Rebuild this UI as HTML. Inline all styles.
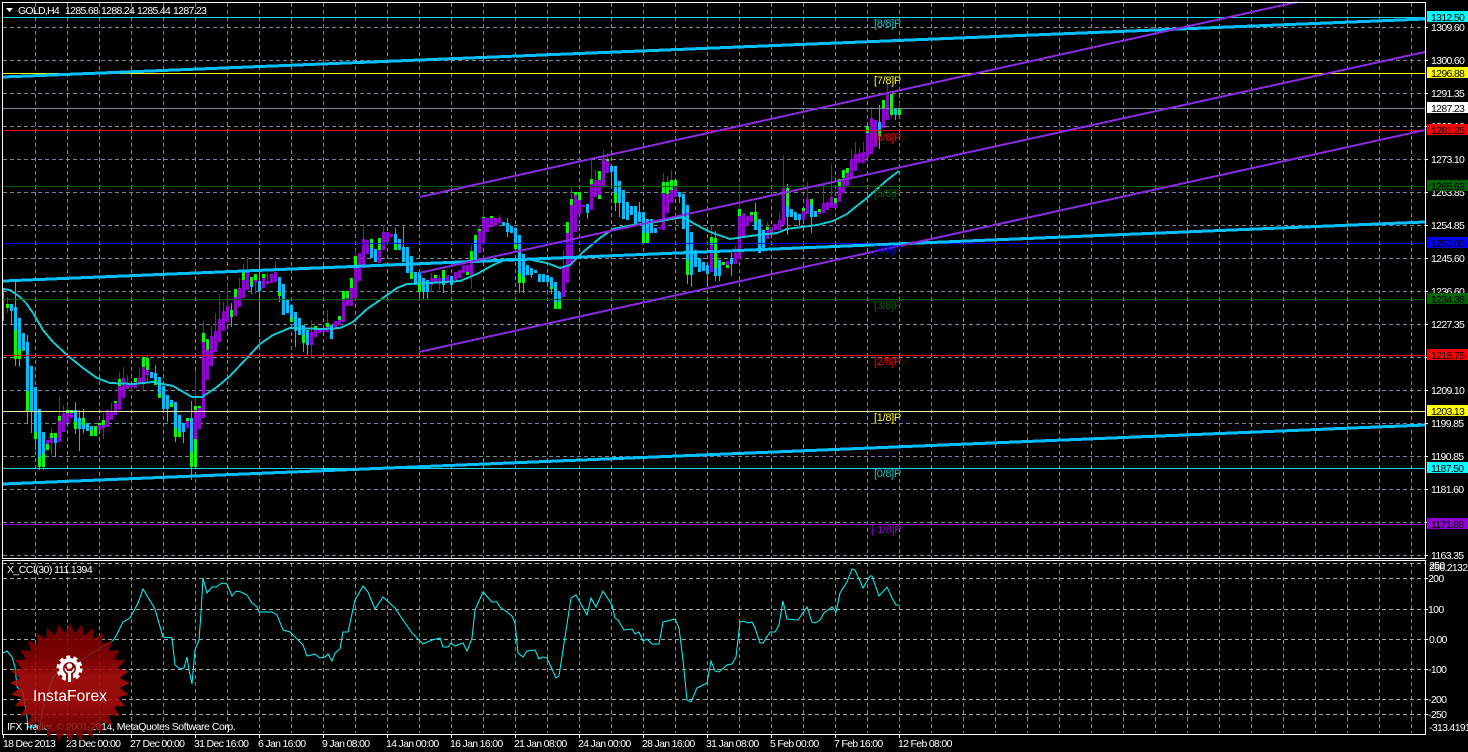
<!DOCTYPE html>
<html><head><meta charset="utf-8"><title>GOLD,H4</title>
<style>
html,body{margin:0;padding:0;background:#000;width:1468px;height:752px;overflow:hidden}
svg{display:block;position:absolute;left:0;top:0}
text{font-family:"Liberation Sans",sans-serif;font-size:10.5px;letter-spacing:-.68px;fill:#fff}
.k text,text.k{fill:#000}
.m text{font-size:11px;letter-spacing:-.3px}
</style></head><body>
<svg width="1468" height="752" viewBox="0 0 1468 752" xmlns="http://www.w3.org/2000/svg">
<rect width="1468" height="752" fill="#000"/>
<!-- grid -->
<path fill="none" stroke="#778899" stroke-width="1" stroke-dasharray="4 3" shape-rendering="crispEdges" d="M35.5 3V733M67.5 3V733M99.5 3V733M131.5 3V733M163.5 3V733M195.5 3V733M227.5 3V733M259.5 3V733M291.5 3V733M323.5 3V733M355.5 3V733M387.5 3V733M419.5 3V733M451.5 3V733M483.5 3V733M515.5 3V733M547.5 3V733M579.5 3V733M611.5 3V733M643.5 3V733M675.5 3V733M707.5 3V733M739.5 3V733M771.5 3V733M803.5 3V733M835.5 3V733M867.5 3V733M899.5 3V733M931.5 3V733M963.5 3V733M995.5 3V733M1027.5 3V733M1059.5 3V733M1091.5 3V733M1123.5 3V733M1155.5 3V733M1187.5 3V733M1219.5 3V733M1251.5 3V733M1283.5 3V733M1315.5 3V733M1347.5 3V733M1379.5 3V733M1411.5 3V733"/>
<path fill="none" stroke="#778899" stroke-width="1" stroke-dasharray="4 3" shape-rendering="crispEdges" d="M3 27.5H1425M3 60.5H1425M3 93.5H1425M3 126.5H1425M3 159.5H1425M3 192.5H1425M3 225.5H1425M3 258.5H1425M3 291.5H1425M3 324.5H1425M3 357.5H1425M3 390.5H1425M3 423.5H1425M3 456.5H1425M3 489.5H1425M3 522.5H1425M3 555.5H1425"/>
<rect x="3" y="558" width="1422" height="3" fill="#000"/>
<path fill="none" stroke="#a8a8ac" stroke-width="1" stroke-dasharray="4 3" shape-rendering="crispEdges" d="M3 563.5H1425M3 578.5H1425M3 609.5H1425M3 639.5H1425M3 669.5H1425M3 699.5H1425M3 714.5H1425"/>

<!-- wicks -->
<g fill="none" stroke-width="1" shape-rendering="crispEdges">
<path stroke="#00bfff" d="M3.5 290V321M11.5 304V325M15.5 280V366M19.5 318V367M27.5 335V424M31.5 366V433M35.5 387V450M39.5 409V470M43.5 432V470M55.5 433V457M75.5 402V434M79.5 410V451M83.5 409V433M155.5 365V385M163.5 386V413M167.5 395V422M175.5 402V442M183.5 423V443M191.5 401V480M231.5 303V327M251.5 277V294M259.5 248V337M279.5 277V302M295.5 312V347M303.5 325V352M307.5 330V355M395.5 228V250M403.5 225V262M419.5 272V299M423.5 278V299M427.5 280V300M443.5 270V293M451.5 276V294M507.5 218V237M519.5 235V293M523.5 254V293M531.5 268V278M547.5 275V286M551.5 277V294M587.5 204V219M611.5 166V186M615.5 166V211M619.5 181V217M639.5 202V222M679.5 192V203M687.5 205V284M691.5 232V287M707.5 265V287M715.5 231V281M719.5 260V281M731.5 253V276M755.5 203V230M763.5 230V252M787.5 184V235M799.5 214V226M811.5 199V233M879.5 105V149M895.5 108V120"/>
<path stroke="#9400d3" d="M7.5 297V313M51.5 428V455M59.5 396V442M63.5 405V432M67.5 405V423M103.5 413V439M111.5 403V420M119.5 372V410M123.5 367V398M127.5 375V389M131.5 384V392M139.5 368V383M143.5 356V390M147.5 356V383M195.5 370V467M203.5 321V418M211.5 326V366M215.5 313V352M219.5 294V342M223.5 302V331M227.5 284V322M239.5 278V307M243.5 264V298M247.5 257V290M255.5 274V294M267.5 273V284M275.5 261V282M311.5 320V357M327.5 310V332M355.5 250V298M363.5 226V268M383.5 225V250M431.5 273V292M439.5 275V290M471.5 245V289M479.5 225V253M483.5 207V243M499.5 215V227M563.5 250V297M571.5 187V265M591.5 160V210M595.5 170V197M603.5 150V187M607.5 153V173M663.5 173V229M667.5 176V213M671.5 170V203M711.5 226V272M735.5 246V264M739.5 186V259M767.5 222V239M779.5 213V230M783.5 155V225M807.5 182V214M823.5 185V213M831.5 164V208M839.5 178V202M851.5 149V178M855.5 142V171M859.5 148V163M863.5 142V163M871.5 107V154M887.5 83V120M891.5 94V118M899.5 103V115"/>
</g>
<!-- bodies -->
<g fill="none" stroke-width="3" shape-rendering="crispEdges">
<path stroke="#00bfff" d="M11.5 304V311M15.5 307V359M19.5 318V359M23.5 333V351M27.5 342V411M31.5 366V411M35.5 387V439M39.5 409V467M43.5 432V467M55.5 433V443M75.5 410V429M79.5 418V429M83.5 418V429M87.5 423V431M91.5 426V436M151.5 372V378M155.5 373V385M159.5 377V398M163.5 386V409M167.5 395V409M171.5 400V407M175.5 402V437M179.5 415V437M183.5 423V432M191.5 418V467M231.5 310V317M251.5 277V287M259.5 281V291M279.5 277V296M283.5 284V315M287.5 300V313M291.5 305V322M295.5 312V331M299.5 318V335M303.5 325V343M307.5 330V345M331.5 325V339M371.5 248V258M375.5 249V262M395.5 234V250M399.5 239V250M403.5 247V262M407.5 247V273M411.5 256V279M415.5 272V285M419.5 272V292M423.5 278V292M427.5 280V292M443.5 270V285M451.5 276V285M475.5 235V262M503.5 222V226M507.5 223V232M511.5 226V233M515.5 228V249M519.5 235V283M523.5 254V283M527.5 265V275M531.5 268V275M535.5 270V273M539.5 274V282M543.5 274V282M547.5 275V282M551.5 277V289M555.5 282V309M559.5 292V309M587.5 204V213M611.5 166V172M615.5 166V203M619.5 181V203M623.5 190V219M627.5 202V220M631.5 206V215M635.5 206V225M639.5 212V222M643.5 212V243M647.5 219V243M651.5 219V233M655.5 228V233M679.5 192V197M683.5 194V229M687.5 205V275M691.5 232V275M695.5 250V267M699.5 258V272M703.5 262V271M707.5 265V274M715.5 260V276M719.5 260V276M723.5 262V265M731.5 258V264M755.5 212V230M759.5 219V253M763.5 230V248M787.5 206V217M791.5 209V217M795.5 212V220M799.5 214V220M811.5 205V217M815.5 211V217M879.5 122V130M895.5 108V115"/>
<path stroke="#9400d3" d="M47.5 440V450M51.5 438V443M59.5 421V442M63.5 413V432M67.5 413V423M71.5 413V418M95.5 428V436M99.5 425V430M103.5 425V428M107.5 410V427M111.5 411V420M115.5 403V415M119.5 386V410M123.5 378V398M127.5 384V389M131.5 384V387M135.5 382V388M139.5 378V383M143.5 367V382M147.5 370V375M187.5 421V428M195.5 410V439M199.5 406V429M203.5 342V418M207.5 350V380M211.5 336V366M215.5 331V352M219.5 319V342M223.5 311V331M227.5 306V322M235.5 297V316M239.5 288V307M243.5 280V298M247.5 272V290M255.5 280V283M263.5 278V288M267.5 281V284M271.5 274V283M275.5 272V282M311.5 332V345M315.5 330V337M319.5 329V333M323.5 328V332M327.5 327V332M335.5 321V327M339.5 316V325M343.5 300V322M347.5 298V306M351.5 288V306M355.5 265V298M359.5 253V281M363.5 239V268M367.5 240V254M379.5 250V263M383.5 232V250M387.5 232V242M391.5 234V237M431.5 278V285M435.5 278V283M439.5 278V283M447.5 275V282M455.5 272V280M459.5 270V278M463.5 265V273M467.5 265V272M471.5 260V275M479.5 231V253M483.5 218V243M487.5 218V232M491.5 218V227M495.5 218V226M499.5 218V223M563.5 267V297M567.5 233V283M571.5 205V265M575.5 195V232M579.5 200V214M583.5 205V207M591.5 184V210M595.5 180V197M599.5 180V195M603.5 158V187M607.5 161V173M659.5 227V229M663.5 193V230M667.5 194V213M671.5 190V203M675.5 187V197M711.5 245V272M727.5 261V266M735.5 253V264M739.5 216V259M743.5 213V238M747.5 216V226M751.5 215V222M767.5 230V239M771.5 227V235M775.5 224V230M779.5 220V230M783.5 188V225M803.5 211V220M807.5 199V214M819.5 209V214M823.5 203V213M827.5 202V210M831.5 197V208M835.5 198V208M839.5 183V202M843.5 178V193M847.5 173V187M851.5 159V178M855.5 154V171M859.5 153V163M863.5 152V163M867.5 133V157M871.5 118V154M875.5 120V147M883.5 109V128M887.5 94V120"/>
<path stroke="#00ff00" d="M7.5 304V308M15.5 330V359M19.5 349V359M27.5 391V411M35.5 432V439M39.5 457V467M43.5 454V467M47.5 444V450M51.5 433V438M55.5 433V438M59.5 416V421M67.5 410V413M71.5 410V413M75.5 422V429M83.5 418V425M91.5 430V436M95.5 426V436M99.5 423V425M103.5 420V425M115.5 401V403M119.5 379V386M135.5 378V382M143.5 357V367M147.5 358V370M155.5 380V385M159.5 394V398M171.5 404V407M175.5 428V437M179.5 432V437M187.5 418V421M191.5 452V467M195.5 406V410M195.5 439V467M199.5 406V408M203.5 333V342M207.5 339V350M231.5 310V317M235.5 289V297M243.5 272V280M251.5 277V285M255.5 274V280M263.5 274V278M279.5 292V296M291.5 318V322M303.5 335V343M315.5 326V330M327.5 323V327M339.5 316V320M343.5 291V300M347.5 291V298M351.5 278V288M355.5 256V265M371.5 239V248M379.5 238V250M395.5 243V250M411.5 273V279M419.5 282V292M435.5 275V278M443.5 270V278M467.5 272V275M471.5 251V260M475.5 235V240M479.5 229V231M483.5 217V218M491.5 216V218M515.5 243V249M519.5 273V283M523.5 277V283M551.5 287V289M555.5 302V309M559.5 302V309M567.5 222V233M571.5 199V205M575.5 192V195M579.5 192V200M591.5 179V184M599.5 171V180M599.5 195V199M607.5 159V161M615.5 193V203M643.5 233V243M647.5 233V243M663.5 182V193M667.5 182V194M671.5 180V190M675.5 180V187M687.5 260V275M711.5 237V245M715.5 238V268M723.5 262V265M727.5 265V268M739.5 209V216M751.5 212V215M755.5 212V222M767.5 227V230M787.5 188V206M803.5 208V211M811.5 199V205M819.5 209V212M835.5 198V203M839.5 179V186M843.5 170V178M847.5 168V173M867.5 126V133M879.5 130V136M883.5 100V109M891.5 94V115M899.5 108V115"/>
</g>
<!-- moving average -->
<polyline fill="none" stroke="#12c8d2" stroke-width="2" shape-rendering="crispEdges" points="3,289 10,290 20,297 26,303 33,313 43,330 53,342 67,355 83,368 97,378 110,383 133,384 153,382 173,386 192,397 202,397 217,387 230,376 247,358 260,344 273,335 290,328 323,329 340,328 353,322 367,309 383,298 397,288 407,284 430,283 460,281 477,274 493,265 507,259 527,259 547,263 560,268 570,265 583,252 600,238 613,229 633,225 650,223 683,217 693,223 710,232 730,239 750,236 777,233 787,229 817,225 833,221 847,214 853,209 867,198 887,180 899,171"/>
<!-- level lines -->
<g stroke-width="1" shape-rendering="crispEdges" fill="none">
<path stroke="#19d9e6" d="M3 17.5H1425M3 468.5H1425"/>
<path stroke="#ffff00" d="M3 73.5H1425"/>
<path stroke="#778899" d="M3 108.5H1425"/>
<path stroke="#ff0000" d="M3 130.5H1425M3 355.5H1425" />
<path stroke="#006400" d="M3 186.5H1425M3 299.5H1425"/>
<path stroke="#0000ff" d="M3 243.5H1425"/>
<path stroke="#f4f4a0" d="M3 411.5H1425"/>
<path stroke="#9400d3" d="M3 524.5H1425"/>
</g>
<!-- thick lines -->
<g stroke="#00bfff" stroke-width="3" fill="none" shape-rendering="crispEdges">
<path d="M3 77L1425 19"/>
<path d="M3 281L1425 222"/>
<path d="M3 484L1425 425"/>
</g>
<!-- channel -->
<g stroke="#8a2be2" stroke-width="2" fill="none" shape-rendering="crispEdges">
<path d="M420 197L1297 2"/>
<path d="M419 273L1425 52"/>
<path d="M419 352L1425 130"/>
</g>
<!-- level labels -->
<g class="m">
<text x="874" y="27" style="fill:#19c8c8">[8/8]P</text>
<text x="874" y="84" style="fill:#ffff00">[7/8]P</text>
<text x="874" y="141" style="fill:#ff0000">[6/8]P</text>
<text x="874" y="197" style="fill:#0a640a">[5/8]P</text>
<text x="874" y="253" style="fill:#0000ff">[4/8]P</text>
<text x="874" y="309" style="fill:#0a640a">[3/8]P</text>
<text x="874" y="365" style="fill:#ff0000">[2/8]P</text>
<text x="874" y="421" style="fill:#ffff00">[1/8]P</text>
<text x="874" y="477" style="fill:#19c8c8">[0/8]P</text>
<text x="871" y="533" style="fill:#9400d3">[-1/8]P</text>
</g>
<!-- frames -->
<g stroke="#fff" stroke-width="1" fill="none" shape-rendering="crispEdges">
<path d="M2.5 2.5H1425.5V558.5H2.5Z"/>
<path d="M2.5 560.5H1425.5V734.5H2.5Z"/>
<path d="M1426 27.5h2M1426 60.5h2M1426 93.5h2M1426 126.5h2M1426 159.5h2M1426 192.5h2M1426 225.5h2M1426 258.5h2M1426 291.5h2M1426 324.5h2M1426 357.5h2M1426 390.5h2M1426 423.5h2M1426 456.5h2M1426 489.5h2M1426 522.5h2M1426 555.5h2M1426 578.5h2M1426 609.5h2M1426 639.5h2M1426 669.5h2M1426 699.5h2M1426 714.5h2"/>
<path d="M3.5 735v3M67.5 735v3M131.5 735v3M195.5 735v3M259.5 735v3M323.5 735v3M387.5 735v3M451.5 735v3M515.5 735v3M579.5 735v3M643.5 735v3M707.5 735v3M771.5 735v3M835.5 735v3M899.5 735v3"/>
</g>
<!-- price axis -->
<g>
<text x="1431" y="31">1309.60</text>
<text x="1431" y="64">1300.60</text>
<text x="1431" y="97">1291.35</text>
<text x="1431" y="130">1282.10</text>
<text x="1431" y="163">1273.10</text>
<text x="1431" y="196">1263.85</text>
<text x="1431" y="229">1254.85</text>
<text x="1431" y="262">1245.60</text>
<text x="1431" y="295">1236.60</text>
<text x="1431" y="328">1227.35</text>
<text x="1431" y="394">1209.10</text>
<text x="1431" y="427">1199.85</text>
<text x="1431" y="460">1190.85</text>
<text x="1431" y="493">1181.60</text>
<text x="1431" y="559">1163.35</text>
<text x="1429" y="569">250</text>
<text x="1429" y="571">256.2132</text>
<text x="1428" y="582">200</text>
<text x="1428" y="613">100</text>
<text x="1429" y="643">0.00</text>
<text x="1428" y="673">-100</text>
<text x="1428" y="703">-200</text>
<text x="1428" y="718">-250</text>
<text x="1429" y="731">-313.4191</text>
</g>
<!-- price tags -->
<g shape-rendering="crispEdges">
<rect x="1427" y="11" width="41" height="11" fill="#00ffff"/>
<rect x="1427" y="67" width="41" height="11" fill="#ffff00"/>
<rect x="1427" y="102" width="41" height="11" fill="#ffffff"/>
<rect x="1427" y="124" width="41" height="11" fill="#ff0000"/>
<rect x="1427" y="180" width="41" height="11" fill="#006400"/>
<rect x="1427" y="237" width="41" height="11" fill="#0000ff"/>
<rect x="1427" y="293" width="41" height="11" fill="#006400"/>
<rect x="1427" y="349" width="41" height="11" fill="#ff0000"/>
<rect x="1427" y="405" width="41" height="11" fill="#ffff00"/>
<rect x="1427" y="462" width="41" height="11" fill="#00ffff"/>
<rect x="1427" y="518" width="41" height="11" fill="#9400d3"/>
</g>
<g class="k">
<text x="1431" y="21">1312.50</text>
<text x="1431" y="77">1296.88</text>
<text x="1431" y="112">1287.23</text>
<text x="1431" y="134">1281.25</text>
<text x="1431" y="190">1265.63</text>
<text x="1431" y="247">1250.00</text>
<text x="1431" y="303">1234.38</text>
<text x="1431" y="359">1218.75</text>
<text x="1431" y="415">1203.13</text>
<text x="1431" y="472">1187.50</text>
<text x="1431" y="528">1171.88</text>
</g>
<!-- CCI -->
<polyline fill="none" stroke="#00ffff" stroke-width="1" points="3,653 7,651 12,657 15,667 17,687 23,692 27,717 28,727 40,727 43,707 53,677 73,659 83,659 100,648 110,643 115,638 123,622 130,618 138,603 143,589 155,609 163,637 172,638 175,665 180,669 184,668 187,657 189,670 192,684 195,650 199,640 201,613 203,578 207,593 212,587 216,587 222,583 227,584 232,596 236,591 241,592 247,595 252,603 257,607 259,612 272,612 277,615 283,630 290,632 303,645 307,656 315,654 320,658 325,657 328,654 332,661 335,653 340,649 343,632 348,632 355,600 363,586 368,592 375,609 383,597 395,608 403,620 412,633 423,644 432,640 440,638 443,647 448,647 451,643 455,646 463,643 467,651 472,638 475,610 483,592 492,602 497,602 500,607 507,612 512,616 515,623 518,653 523,657 527,651 535,650 539,659 543,657 547,658 556,678 559,676 565,637 571,598 576,595 587,615 591,598 596,607 603,591 612,605 615,618 618,620 624,630 632,629 635,634 639,632 643,641 647,639 652,644 659,644 663,622 675,619 679,628 683,660 687,700 691,702 697,688 707,683 711,661 715,671 719,672 727,665 732,664 736,657 740,622 743,621 748,623 752,622 755,628 760,643 763,643 770,632 775,632 779,625 783,601 787,619 798,620 807,607 812,622 815,623 820,620 824,613 832,607 836,612 840,593 847,582 852,569 855,570 863,588 870,576 872,576 879,596 887,587 892,598 896,605 899,605"/>
<!-- header -->
<path d="M6 8h7l-3.500 4z" fill="#fff"/>
<text x="18" y="14" textLength="41" lengthAdjust="spacing">GOLD,H4</text>
<text x="65" y="14">1285.68</text>
<text x="101" y="14">1288.24</text>
<text x="137" y="14">1285.44</text>
<text x="173" y="14">1287.23</text>
<text x="7" y="573" textLength="85" lengthAdjust="spacing">X_CCI(30) 111.1394</text>
<text x="7" y="730" textLength="228" lengthAdjust="spacing">IFX Trader, © 2001-2014, MetaQuotes Software Corp.</text>
<!-- time axis -->
<g>
<text x="3" y="747">18 Dec 2013</text>
<text x="66" y="747">23 Dec 00:00</text>
<text x="130" y="747">27 Dec 00:00</text>
<text x="194" y="747">31 Dec 16:00</text>
<text x="258" y="747">6 Jan 16:00</text>
<text x="322" y="747">9 Jan 08:00</text>
<text x="386" y="747">14 Jan 00:00</text>
<text x="450" y="747">16 Jan 16:00</text>
<text x="514" y="747">21 Jan 08:00</text>
<text x="578" y="747">24 Jan 00:00</text>
<text x="642" y="747">28 Jan 16:00</text>
<text x="706" y="747">31 Jan 08:00</text>
<text x="770" y="747">5 Feb 00:00</text>
<text x="834" y="747">7 Feb 16:00</text>
<text x="898" y="747">12 Feb 08:00</text>
</g>
<!-- logo -->
<defs><linearGradient id="lg" x1="0" y1="0" x2="0" y2="1">
<stop offset="0" stop-color="#7a0000"/><stop offset=".3" stop-color="#8f0303"/><stop offset=".45" stop-color="#b40f0f"/><stop offset=".7" stop-color="#ac0b0b"/><stop offset="1" stop-color="#660000"/>
</linearGradient></defs>
<g transform="translate(70,683)">
<polygon fill="url(#lg)" opacity=".86" points="0,-60 4.9,-49.8 11.7,-58.8 14.5,-47.8 23,-55.4 23.6,-44.1 33.3,-49.9 31.7,-38.7 42.4,-42.4 38.7,-31.7 49.9,-33.3 44.1,-23.6 55.4,-23 47.8,-14.5 58.8,-11.7 49.8,-4.9 60,0 49.8,4.9 58.8,11.7 47.8,14.5 55.4,23 44.1,23.6 49.9,33.3 38.7,31.7 42.4,42.4 31.7,38.7 33.3,49.9 23.6,44.1 23,55.4 14.5,47.8 11.7,58.8 4.9,49.8 0,60 -4.9,49.8 -11.7,58.8 -14.5,47.8 -23,55.4 -23.6,44.1 -33.3,49.9 -31.7,38.7 -42.4,42.4 -38.7,31.7 -49.9,33.3 -44.1,23.6 -55.4,23 -47.8,14.5 -58.8,11.7 -49.8,4.9 -60,0 -49.8,-4.9 -58.8,-11.7 -47.8,-14.5 -55.4,-23 -44.1,-23.6 -49.9,-33.3 -38.7,-31.7 -42.4,-42.4 -31.7,-38.7 -33.3,-49.9 -23.6,-44.1 -23,-55.4 -14.5,-47.8 -11.7,-58.8 -4.9,-49.8"/>
</g>
<g>
<circle cx="69.5" cy="668.5" r="8.5" fill="none" stroke="#fff" stroke-width="4"/>
<circle cx="69.5" cy="668.5" r="11.5" fill="none" stroke="#fff" stroke-width="3" stroke-dasharray="4 3.23"/>
<rect x="66" y="673" width="7" height="11" fill="#a80a0a"/>
<circle cx="69.5" cy="666" r="2.8" fill="#fff"/>
<path d="M65 668.5c1 3 3 4 4.5 4s3.500-1 4.500-4" fill="none" stroke="#fff" stroke-width="1.500"/>
<rect x="68" y="671" width="3" height="11" fill="#fff"/>
</g>
<text x="33" y="701" textLength="74" lengthAdjust="spacingAndGlyphs" style="font-size:16px;letter-spacing:0;fill:#fff">InstaForex</text>
</svg>
</body></html>
